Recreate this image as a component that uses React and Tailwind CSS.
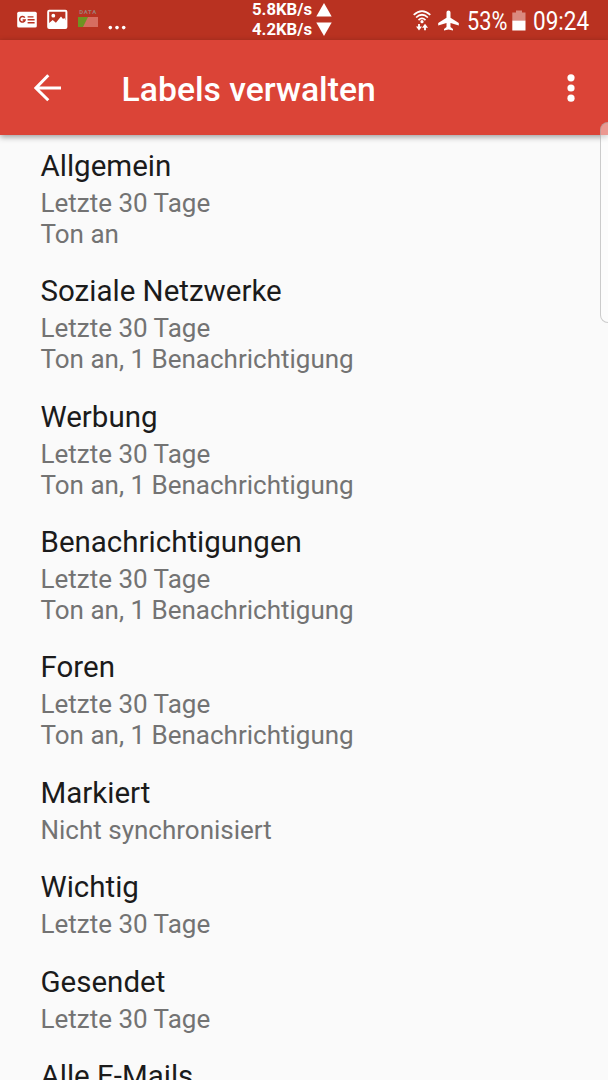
const SYNCED = 'Letzte 30 Tage'
const NOTIFY = 'Ton an, 1 Benachrichtigung'

const LABELS = [
  { name: 'Allgemein', details: [SYNCED, 'Ton an'] },
  { name: 'Soziale Netzwerke', details: [SYNCED, NOTIFY] },
  { name: 'Werbung', details: [SYNCED, NOTIFY] },
  { name: 'Benachrichtigungen', details: [SYNCED, NOTIFY] },
  { name: 'Foren', details: [SYNCED, NOTIFY] },
  { name: 'Markiert', details: ['Nicht synchronisiert'] },
  { name: 'Wichtig', details: [SYNCED] },
  { name: 'Gesendet', details: [SYNCED] },
  { name: 'Alle E-Mails', details: [SYNCED] },
]

function NewsIcon() {
  return (
    <svg className="h-[17px] w-[21px]" viewBox="0 0 21 17">
      <rect x="0.2" y="0.7" width="19.6" height="15.8" rx="1.6" fill="#fff" />
      <g fill="none" stroke="#b93221" strokeWidth="1.5">
        <path d="M7.8 6.7A2.8 2.8 0 1 0 8.2 8.9H5.6" />
        <path d="M10.6 5.9H16.5M10.6 8.8H17.6M10.6 11.7H17.6" strokeWidth="1.4" />
      </g>
    </svg>
  )
}

function PictureIcon() {
  return (
    <svg className="h-[20px] w-[21px]" viewBox="0 0 21 20">
      <rect x="1.2" y="1.7" width="18.2" height="17.2" rx="1" fill="none" stroke="#fff" strokeWidth="2" />
      <circle cx="6.3" cy="6.7" r="1.9" fill="#fff" />
      <path d="M1.5 14.5L5.7 11L8.9 13.8L14 7.4L16 10L17.3 9L19.3 12V18.7H1.5Z" fill="#fff" />
    </svg>
  )
}

// Data usage monitor: caption above a two-tone bar
function DataIcon() {
  return (
    <div className="flex w-5 flex-col items-center">
      <span className="text-[6px] leading-[7px] font-bold tracking-[0.7px] text-[#a07c76]">DATA</span>
      <svg className="mt-0.5 h-2.5 w-5" viewBox="0 0 20 10">
        <rect width="20" height="10" fill="#d66d60" />
        <path d="M0 0H10L5 10H0Z" fill="#6f9322" />
      </svg>
    </div>
  )
}

function WifiIcon() {
  return (
    <svg className="h-[21px] w-[18px]" viewBox="0 0 18 21" fill="none" stroke="#fff">
      <path d="M0.7 4.9Q9 -2.8 17.3 4.9M3.1 7.5Q9 2 14.9 7.5M5.5 10.1Q9 6.8 12.5 10.1" strokeWidth="1.7" />
      <circle cx="9" cy="11.7" r="1.6" fill="#fff" stroke="none" />
      <path d="M6 14V17.5M12 20.2V16.5" strokeWidth="1.8" />
      <path d="M3 16.4H9L6 20.4ZM9 17.8H15L12 13.8Z" fill="#fff" stroke="none" />
    </svg>
  )
}

function PlaneIcon() {
  return (
    <svg className="h-[21px] w-[21px]" viewBox="0 0 21 21" fill="#fff">
      <path d="M10.5 0.4C11.7 0.4 12.5 1.3 12.5 2.6V7.8L20.8 13V15.4L12.5 12.9V17.1L15 19V20.6L10.5 19.4L6 20.6V19L8.5 17.1V12.9L0.2 15.4V13L8.5 7.8V2.6C8.5 1.3 9.3 0.4 10.5 0.4Z" />
    </svg>
  )
}

function BatteryIcon() {
  return (
    <svg className="h-[21px] w-[14px]" viewBox="0 0 14 21">
      <path d="M4 0.5H10V2.5H13.5V10.5H0.3V2.5H4Z" fill="#da8a80" />
      <rect x="0.3" y="10.5" width="13.2" height="10" fill="#fff" />
    </svg>
  )
}

function StatusBar() {
  return (
    <div className="relative flex h-10 shrink-0 bg-[#b93221] text-white">
      <div className="flex items-start pl-[17px]">
        <div className="pt-[11px]"><NewsIcon /></div>
        <div className="ml-[9px] pt-[9px]"><PictureIcon /></div>
        <div className="ml-[10px] pt-[8px]"><DataIcon /></div>
        <svg className="mt-[25px] ml-[10px] h-1.5 w-[18px]" viewBox="0 0 18 6" fill="#fff">
          <circle cx="2.3" cy="2.6" r="1.8" />
          <circle cx="9" cy="2.6" r="1.8" />
          <circle cx="15.7" cy="2.6" r="1.8" />
        </svg>
      </div>

      {/* Network speed, centred on the bar */}
      <div className="absolute top-0 left-[252px] text-[16.7px] leading-[19.5px] font-bold">
        <div className="flex items-center gap-[5px]">
          <span className="w-[59px] whitespace-nowrap">5.8KB/s</span>
          <svg className="h-3.5 w-4" viewBox="0 0 16 14" fill="#fff"><path d="M8 0L15.7 13.5H0.3Z" /></svg>
        </div>
        <div className="flex items-center gap-[5px]">
          <span className="w-[59px] whitespace-nowrap">4.2KB/s</span>
          <svg className="h-3.5 w-4" viewBox="0 0 16 14" fill="#fff"><path d="M8 14L15.7 0.5H0.3Z" /></svg>
        </div>
      </div>

      <div className="ml-auto flex items-start pr-[18px] text-[25px] leading-[43px]">
        <div className="pt-[9.5px]"><WifiIcon /></div>
        <div className="ml-[7px] pt-[9.5px]"><PlaneIcon /></div>
        <span className="ml-[8px] w-[41px]"><span className="inline-block origin-left scale-x-[0.87] whitespace-nowrap">53%</span></span>
        <div className="ml-[4px] pt-[9.5px]"><BatteryIcon /></div>
        <span className="ml-[7px] w-[57px]"><span className="inline-block origin-left scale-x-[0.9] whitespace-nowrap">09:24</span></span>
      </div>
    </div>
  )
}

function AppBar() {
  return (
    <header className="z-10 flex h-[95px] shrink-0 items-center bg-[#db4437] pr-[33px] pl-[33.5px] text-white shadow-[0_2px_6px_rgba(0,0,0,0.38)]">
      <svg className="h-7 w-7" viewBox="0 0 28 28" fill="none" stroke="#fff" strokeWidth="3">
        <path d="M14.3 1.3L1.9 14L14.3 26.3M2 14H27" />
      </svg>
      <h1 className="ml-[60.1px] pt-[4px] text-[33.7px] leading-10 font-medium">Labels verwalten</h1>
      <svg className="ml-auto h-7 w-2" viewBox="0 0 8 28" fill="#fff">
        <circle cx="4" cy="3.8" r="3.6" />
        <circle cx="4" cy="14" r="3.6" />
        <circle cx="4" cy="24.2" r="3.6" />
      </svg>
    </header>
  )
}

function LabelItem({ name, details }) {
  return (
    <li className="pb-[24.4px]">
      <div className="text-[29.5px] leading-[35px] text-[#1b1b1b]">{name}</div>
      <div className="pt-1 text-[26px] leading-[31px] text-[#737373]">
        {details.map(line => <div key={line}>{line}</div>)}
      </div>
    </li>
  )
}

export default function App() {
  return (
    <div className="relative flex h-[1080px] w-[608px] flex-col overflow-hidden bg-[#fafafa] font-['Roboto',sans-serif]">
      <StatusBar />
      <AppBar />
      <ul className="min-h-0 flex-1 overflow-hidden pt-[13.9px] pl-[40.5px]">
        {LABELS.map(label => <LabelItem key={label.name} {...label} />)}
      </ul>

      {/* Edge panel handle */}
      <div className="absolute top-[122px] -right-px z-20 h-[201px] w-[9px] rounded-l-[8px] border border-r-0 border-[#999]/50 bg-white/45" />
    </div>
  )
}
